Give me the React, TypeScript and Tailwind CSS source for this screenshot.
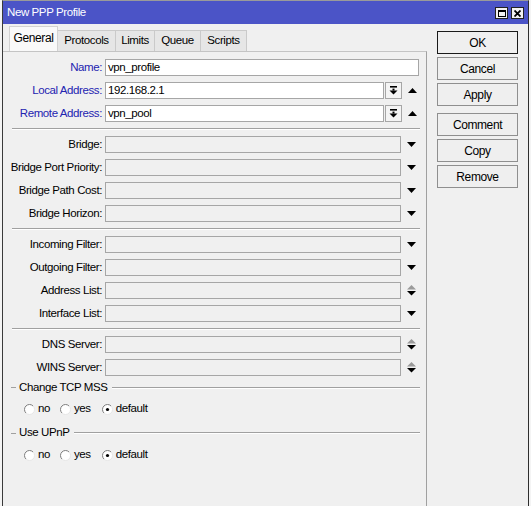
import React from 'react';

type Kind = 'plain' | 'pick' | 'down' | 'updown';

function DownTri() {
  return (
    <svg width="9" height="5" viewBox="0 0 9 5">
      <polygon points="0,0 9,0 4.5,5" fill="#000" />
    </svg>
  );
}

function UpTri() {
  return (
    <svg width="9" height="5" viewBox="0 0 9 5">
      <polygon points="0,5 9,5 4.5,0" fill="#000" />
    </svg>
  );
}

function UpDown() {
  return (
    <svg width="9" height="11" viewBox="0 0 9 11">
      <polygon points="0,4.5 9,4.5 4.5,0" fill="#9a9a9a" />
      <polygon points="0,6 9,6 4.5,10.5" fill="#000" />
    </svg>
  );
}

function PickGlyph() {
  return (
    <svg width="9" height="9" viewBox="0 0 9 9">
      <rect x="1" y="0" width="7" height="1.6" fill="#000" />
      <rect x="3.5" y="2.6" width="2" height="2" fill="#000" />
      <polygon points="0.5,4.5 8.5,4.5 4.5,8.6" fill="#000" />
    </svg>
  );
}

function Row({ label, blue, value, kind, white }: { label: string; blue?: boolean; value?: string; kind: Kind; white?: boolean }) {
  const bg = white ? 'bg-white' : 'bg-[#f0f0f0]';
  return (
    <div className="h-[23px] flex items-center">
      <div className={`w-[99px] text-right whitespace-nowrap ${blue ? 'text-[#2323b0]' : 'text-black'}`}>{label}</div>
      {kind === 'plain' && (
        <div className={`ml-[3px] w-[314px] h-[17px] border border-[#a6a6a6] ${bg} pl-[2px] leading-[15px]`}>{value}</div>
      )}
      {kind === 'pick' && (
        <>
          <div className={`ml-[3px] w-[279px] h-[17px] border border-[#a6a6a6] ${bg} pl-[2px] leading-[15px]`}>{value}</div>
          <div className="ml-[1px] w-[17px] h-[17px] border border-[#a6a6a6] bg-[#f4f4f4] flex items-center justify-center">
            <PickGlyph />
          </div>
          <div className="w-[20px] flex justify-center">
            <UpTri />
          </div>
        </>
      )}
      {(kind === 'down' || kind === 'updown') && (
        <>
          <div className={`ml-[3px] w-[296px] h-[17px] border border-[#a6a6a6] ${bg}`} />
          <div className="w-[20px] flex justify-center">{kind === 'down' ? <DownTri /> : <UpDown />}</div>
        </>
      )}
    </div>
  );
}

function Sep() {
  return (
    <div className="h-[8px] flex items-center">
      <div className="ml-[9px] w-[408px] border-t border-[#a0a0a0] border-b border-b-white" />
    </div>
  );
}

function GroupHead({ title, h }: { title: string; h: string }) {
  return (
    <div className={`${h} w-[417px] flex items-center`}>
      <div className="ml-[8px] w-[5px] border-t border-[#a0a0a0]" />
      <span className="ml-[3px] whitespace-nowrap text-[11.5px]">{title}</span>
      <div className="ml-[4px] flex-1 border-t border-[#a0a0a0] border-b border-b-white" />
    </div>
  );
}

function Radio({ on }: { on?: boolean }) {
  return (
    <svg width="11" height="11" viewBox="0 0 11 11">
      <circle cx="5.5" cy="5.5" r="5" fill="#fff" />
      <path d="M9.04 1.96 A5 5 0 0 0 1.96 9.04" fill="none" stroke="#7d7d7d" strokeWidth="1" />
      <path d="M1.96 9.04 A5 5 0 0 0 9.04 1.96" fill="none" stroke="#e6e6e6" strokeWidth="1" />
      {on && <circle cx="5.5" cy="5.5" r="1.6" fill="#000" />}
    </svg>
  );
}

function RadioRow({ h }: { h: string }) {
  return (
    <div className={`${h} flex items-center pl-[21px] text-[11.5px]`}>
      <Radio />
      <span className="ml-[3px]">no</span>
      <span className="ml-[10px] flex items-center">
        <Radio />
        <span className="ml-[3px]">yes</span>
      </span>
      <span className="ml-[11px] flex items-center">
        <Radio on />
        <span className="ml-[3px]">default</span>
      </span>
    </div>
  );
}

function Btn({ label, main, cls }: { label: string; main?: boolean; cls?: string }) {
  return (
    <div
      className={`w-[81px] h-[23px] flex items-center justify-center border bg-[#efefef] ${
        main ? 'border-[#1a1a1a]' : 'border-[#8f8f8f]'
      } ${cls ?? ''}`}
    >
      {label}
    </div>
  );
}

export default function App() {
  const tabs = ['Protocols', 'Limits', 'Queue', 'Scripts'];
  const tabW = ['w-[58px]', 'w-[39px]', 'w-[46px]', 'w-[46px]'];

  return (
    <div className="w-[531px] h-[506px] bg-[#f4f4f4] overflow-hidden font-['Liberation_Sans',Arial,sans-serif] text-[11.5px] tracking-[-0.4px] text-black">
      <div className="ml-[2px] w-[527px] h-[506px] flex flex-col border-t border-t-[#9a9a9a] border-r border-r-[#2e2e2e] border-l border-l-[#3a3a3a]">
        {/* title bar */}
        <div className="h-[23px] bg-[#4b54c7] flex items-center pl-[4px] pr-[4px]">
          <span className="text-white text-[11.5px] mt-[1px]">New PPP Profile</span>
          <div className="ml-auto flex items-center gap-[3px] mt-[1px]">
            <div className="w-[13px] h-[12px] bg-[#f2f2f2] border border-[#222] flex items-center justify-center">
              <div className="w-[8px] h-[7px] border border-black border-t-2" />
            </div>
            <div className="w-[13px] h-[12px] bg-[#f2f2f2] border border-[#222] flex items-center justify-center">
              <svg width="7" height="7" viewBox="0 0 7 7">
                <path d="M0.5 0.5 L6.5 6.5 M6.5 0.5 L0.5 6.5" stroke="#000" strokeWidth="1.8" />
              </svg>
            </div>
          </div>
        </div>

        {/* body */}
        <div className="flex-1 flex bg-[#f0f0f0]">
          <div className="w-[424px] flex flex-col">
            <div className="h-[27px] flex items-end pl-[6px]">
              <div className="w-[49px] h-[25px] bg-[#f9f9f9] border border-b-0 border-[#d2d2d2] flex items-center justify-center pb-[3px] text-[12px]">
                General
              </div>
              {tabs.map((t, i) => (
                <div
                  key={t}
                  className={`${tabW[i]} h-[21px] bg-[#e6e6e6] border border-b-0 border-l-0 border-[#cacaca] flex items-center justify-center`}
                >
                  {t}
                </div>
              ))}
            </div>
            <div className="flex-1 border-t border-r border-[#c4c4c4] border-r-[#a0a0a0] pt-[4px]">
              <Row label="Name:" blue value="vpn_profile" kind="plain" white />
              <Row label="Local Address:" blue value="192.168.2.1" kind="pick" white />
              <Row label="Remote Address:" blue value="vpn_pool" kind="pick" white />
              <Sep />
              <Row label="Bridge:" kind="down" />
              <Row label="Bridge Port Priority:" kind="down" />
              <Row label="Bridge Path Cost:" kind="down" />
              <Row label="Bridge Horizon:" kind="down" />
              <Sep />
              <Row label="Incoming Filter:" kind="down" />
              <Row label="Outgoing Filter:" kind="down" />
              <Row label="Address List:" kind="updown" />
              <Row label="Interface List:" kind="down" />
              <Sep />
              <Row label="DNS Server:" kind="updown" />
              <Row label="WINS Server:" kind="updown" />
              <GroupHead title="Change TCP MSS" h="h-[17px]" />
              <RadioRow h="h-[26px]" />
              <GroupHead title="Use UPnP" h="h-[22px]" />
              <RadioRow h="h-[22px]" />
            </div>
          </div>
          <div className="flex-1 pl-[10px] pt-[7px] flex flex-col gap-[3px] text-[12px]">
            <Btn label="OK" main />
            <Btn label="Cancel" />
            <Btn label="Apply" />
            <Btn label="Comment" cls="mt-[4px]" />
            <Btn label="Copy" />
            <Btn label="Remove" />
          </div>
        </div>
      </div>
    </div>
  );
}
